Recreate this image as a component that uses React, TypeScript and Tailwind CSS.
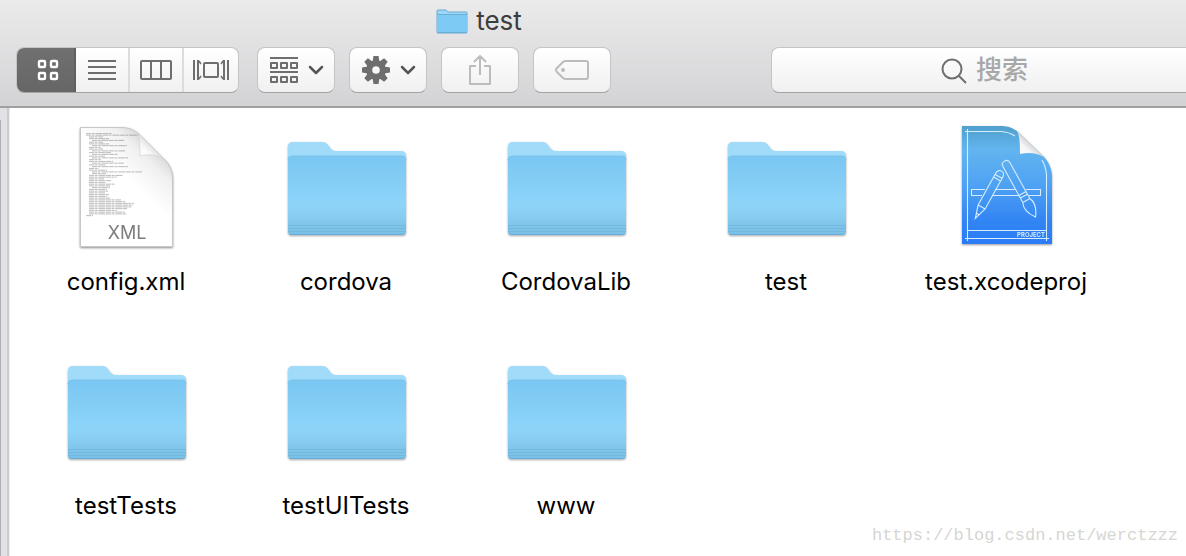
import { useState } from "react";

type Kind = "folder" | "xml" | "project";

const files: { name: string; kind: Kind }[] = [
  { name: "config.xml", kind: "xml" },
  { name: "cordova", kind: "folder" },
  { name: "CordovaLib", kind: "folder" },
  { name: "test", kind: "folder" },
  { name: "test.xcodeproj", kind: "project" },
  { name: "testTests", kind: "folder" },
  { name: "testUITests", kind: "folder" },
  { name: "www", kind: "folder" },
];

// [indent, length] of each line of the XML preview
const previewLines = [
  [0, 26], [0, 52], [3, 14], [3, 20], [6, 32], [3, 14], [3, 20], [6, 35], [3, 12],
  [3, 14], [6, 33], [3, 22], [6, 26], [3, 16], [6, 36], [3, 12], [3, 24], [6, 32],
  [3, 17], [6, 36], [3, 10], [3, 18], [6, 50], [6, 14], [3, 34], [3, 28], [3, 15],
  [3, 22], [3, 17], [3, 26], [3, 21], [6, 18], [3, 18], [3, 19], [3, 16], [3, 20],
  [3, 18], [3, 21], [3, 32], [3, 36], [3, 45], [3, 44], [3, 43], [3, 38], [3, 28],
  [3, 36], [3, 37], [0, 7],
];

const buttonBox =
  "flex h-[46px] items-center justify-center rounded-lg border border-[#c5c5c7] border-b-[#a3a3a5] bg-linear-to-b from-white to-[#f0f0f0]";

function FolderIcon() {
  return (
    <svg className="size-32 drop-shadow-[0_1px_1px_rgba(0,0,0,0.35)]" viewBox="-1 0 128 128" aria-hidden="true">
      <defs>
        <linearGradient id="folder-front" x1="0" y1="0" x2="0" y2="1">
          <stop offset="0" stopColor="#7ac7f2" />
          <stop offset="0.62" stopColor="#8dd4f8" />
          <stop offset="0.75" stopColor="#89cef2" />
          <stop offset="0.86" stopColor="#80c5ea" />
          <stop offset="1" stopColor="#7ac1e8" />
        </linearGradient>
      </defs>
      <path d="M5 108V24q0-5 5-5h29q4 0 6 3l3 4q2 2 4 2h66q5 0 5 5v75q0 4-4 4H9q-4 0-4-4z" fill="#a1dbfa" />
      <path d="M5 108V37q0-4 4-4h110q4 0 4 4v71q0 4-4 4H9q-4 0-4-4z" fill="url(#folder-front)" />
      <path d="M5 37q0-4 4-4h110q4 0 4 4" fill="none" stroke="#7bc3ec" strokeWidth="1" />
      <path d="M5 102.500h118M5 105.500h118M5 108.500h118" stroke="#74b8e0" strokeWidth="1" />
      <path d="M6 110.500q1 1 3 1h110q2 0 3-1" fill="none" stroke="#68add7" strokeWidth="1" />
    </svg>
  );
}

function XmlIcon() {
  return (
    <svg className="size-32 drop-shadow-[0_1px_1px_rgba(0,0,0,0.45)]" viewBox="-1 0 128 128" aria-hidden="true">
      <defs>
        <linearGradient id="xml-page" x1="0.75" y1="0.08" x2="0.5" y2="0.42">
          <stop offset="0" stopColor="#d2d2d2" />
          <stop offset="0.4" stopColor="#f0f0f0" />
          <stop offset="1" stopColor="#ffffff" />
        </linearGradient>
        <linearGradient id="xml-curl" x1="0" y1="1" x2="0.55" y2="0.45">
          <stop offset="0" stopColor="#ffffff" />
          <stop offset="0.6" stopColor="#fafafa" />
          <stop offset="1" stopColor="#dcdcdc" />
        </linearGradient>
      </defs>
      <path d="M17.500 4.500H58C66 4.500 71 7 76 11L101 36C107 42 109.500 48 109.500 57V123.500H17.500z" fill="url(#xml-page)" stroke="#c8c8c8" />
      <g fill="none" stroke="#555555" strokeWidth="0.8" strokeDasharray="5 0.6 3 0.8 7 0.5" opacity="0.5">
        {previewLines.map(([indent, length], i) => (
          <path key={i} d={`M${23 + indent} ${10.4 + i * 1.75}h${length}`} />
        ))}
      </g>
      <path d="M75 10.500C77 16 77 24 77 33C86 31 95 31 102 37L76 11z" fill="url(#xml-curl)" stroke="#cccccc" strokeWidth="0.6" />
      <text x="64" y="116" textAnchor="middle" fontSize="18" fill="#7c7c7c" className="font-['Inter',sans-serif]">
        XML
      </text>
    </svg>
  );
}

function ProjectIcon() {
  return (
    <svg className="size-32 drop-shadow-[0_1px_1px_rgba(0,0,0,0.4)]" viewBox="-1 0 128 128" aria-hidden="true">
      <defs>
        <linearGradient id="project-page" x1="0" y1="0" x2="0" y2="1">
          <stop offset="0" stopColor="#509fcd" />
          <stop offset="0.2" stopColor="#62b5ee" />
          <stop offset="0.5" stopColor="#4fa2f3" />
          <stop offset="0.8" stopColor="#3285f3" />
          <stop offset="1" stopColor="#2b7cf5" />
        </linearGradient>
        <linearGradient id="project-curl" x1="0" y1="1" x2="0.55" y2="0.45">
          <stop offset="0" stopColor="#ffffff" />
          <stop offset="0.6" stopColor="#f6f6f6" />
          <stop offset="1" stopColor="#cfcfcf" />
        </linearGradient>
      </defs>
      <path d="M19 3H57C65 3 70 5 75 9L100 33C106 39 109 46 109 55V121H19z" fill="url(#project-page)" />
      <g fill="none" stroke="#d6edff" strokeWidth="1.100">
        <path d="M24.500 6V118M22 8.500H58Q66 9 72 13M22 115.500H106M103.500 118V52Q103 44 99 37M24 107.500H104" />
        <path d="M42 66.500H28.500V72.500H39M52 66.500H73M49 72.500H76M83 66.500H97.500V72.500H86" />
        <g transform="translate(58 49) rotate(29)">
          <path d="M-4 4Q-4-1 0-1Q4-1 4 4V40L0 53L-4 40zM-4 5H4M-4 8H4M-4 40H4M-1.500 48H1.500" />
        </g>
        <g transform="translate(62 39) rotate(-29)">
          <path d="M-4 3Q-4-1 0-1Q4-1 4 3V36H-4zM-4 36V44H4V36M-4 39H4M-4 44Q-8 52 0 63Q8 52 4 44" />
        </g>
      </g>
      <path d="M74 8C77 14 77 22 77 31C86 29 94 30 101 34L75 9z" fill="url(#project-curl)" />
      <text x="102" y="114" textAnchor="end" fontSize="6" fontWeight="600" fill="#e3f2ff" className="font-['Inter',sans-serif]">
        PROJECT
      </text>
    </svg>
  );
}

function FileIcon({ kind }: { kind: Kind }) {
  if (kind === "xml") return <XmlIcon />;
  if (kind === "project") return <ProjectIcon />;
  return <FolderIcon />;
}

function Chevron() {
  return (
    <svg className="h-3 w-4" viewBox="0 0 16 12" fill="none" stroke="#555555" strokeWidth="2.500" strokeLinecap="round" strokeLinejoin="round" aria-hidden="true">
      <path d="M2 3l6 6 6-6" />
    </svg>
  );
}

function ViewIcon({ view }: { view: string }) {
  return (
    <svg className="h-6 w-9" viewBox="0 0 36 24" fill="none" stroke="currentColor" strokeWidth="2" aria-hidden="true">
      {view === "icons" && (
        <g strokeWidth="2.400">
          <rect x="11" y="3" width="6" height="6" rx="1" />
          <rect x="23" y="3" width="6" height="6" rx="1" />
          <rect x="11" y="15" width="6" height="6" rx="1" />
          <rect x="23" y="15" width="6" height="6" rx="1" />
        </g>
      )}
      {view === "list" && <path d="M4 3h28M4 9h28M4 15h28M4 21h28" />}
      {view === "columns" && (
        <>
          <rect x="3" y="3" width="30" height="18" rx="1" />
          <path d="M13 3v18M23 3v18" />
        </>
      )}
      {view === "flow" && (
        <>
          <rect x="11" y="5" width="14" height="14" rx="1" />
          <path d="M1 2v20M5 2v20M31 2v20M35 2v20" />
          <path d="M6 3l2 3M6 21l2-3M30 3l-2 3M30 21l-2-3" strokeWidth="1.500" />
        </>
      )}
    </svg>
  );
}

const views = [
  { id: "icons", label: "图标", size: "w-[59px]" },
  { id: "list", label: "列表", size: "w-[54px]" },
  { id: "columns", label: "分栏", size: "w-[54px]" },
  { id: "flow", label: "Cover Flow", size: "w-[54px]" },
];

function ViewSwitch() {
  const [active, setActive] = useState("icons");

  return (
    <div className="flex h-[46px] overflow-hidden rounded-lg border border-[#c5c5c7] border-b-[#a3a3a5] bg-linear-to-b from-white to-[#f0f0f0]">
      {views.map(({ id, label, size }) => (
        <button
          key={id}
          aria-label={label}
          aria-pressed={active === id}
          onClick={() => setActive(id)}
          className={`flex items-center justify-center border-r-2 last:border-r-0 ${size} ${
            active === id ? "border-[#606060] bg-linear-to-b from-[#707070] to-[#666666] text-white" : "border-[#dcdcdc] text-[#6e6e6e]"
          }`}
        >
          <ViewIcon view={id} />
        </button>
      ))}
    </div>
  );
}

function Toolbar() {
  return (
    <div className="flex pl-4">
      <ViewSwitch />
      <div className="ml-[18px] flex gap-[14px]">
        <button aria-label="排列" className={`${buttonBox} w-[78px] gap-2`}>
          <svg className="h-7 w-8" viewBox="0 0 32 28" fill="none" stroke="#6e6e6e" strokeWidth="2" aria-hidden="true">
            <path d="M2 2h28M2 16h28" />
            <path d="M3 7h6v5H3zM13 7h6v5h-6zM23 7h6v5h-6zM3 21h6v5H3zM13 21h6v5h-6zM23 21h6v5h-6z" strokeLinejoin="round" />
          </svg>
          <Chevron />
        </button>
        <button aria-label="操作" className={`${buttonBox} w-[78px] gap-2`}>
          <svg className="h-8 w-8" viewBox="-16 -16 32 32" aria-hidden="true">
            {[0, 45, 90, 135, 180, 225, 270, 315].map((angle) => (
              <path key={angle} d="M-3.500-8L-2.500-14h5L3.500-8z" fill="#6e6e6e" transform={`rotate(${angle})`} />
            ))}
            <circle r="6.800" fill="none" stroke="#6e6e6e" strokeWidth="6" />
          </svg>
          <Chevron />
        </button>
        <button aria-label="共享" className={`${buttonBox} w-[78px]`}>
          <svg className="h-8 w-6" viewBox="0 0 24 32" fill="none" stroke="#bcbcbc" strokeWidth="2" strokeLinejoin="round" aria-hidden="true">
            <path d="M8 12H2v18h20V12h-6M12 21V2M6 8l6-6 6 6" />
          </svg>
        </button>
        <button aria-label="标签" className={`${buttonBox} w-[78px]`}>
          <svg className="h-6 w-9" viewBox="0 0 36 24" fill="none" stroke="#bcbcbc" strokeWidth="2" strokeLinejoin="round" aria-hidden="true">
            <path d="M12 3h20q2 0 2 2v14q0 2-2 2H12q-2 0-3-1l-6-6q-2-2 0-4l6-6q1-1 3-1z" />
            <circle cx="9" cy="12" r="2" fill="#bcbcbc" stroke="none" />
          </svg>
        </button>
      </div>
      <label className={`${buttonBox} -mr-[13px] ml-40 flex-1 gap-2`}>
        <svg className="size-7" viewBox="0 0 28 28" fill="none" stroke="#6e6e6e" strokeWidth="2" aria-hidden="true">
          <circle cx="12" cy="13" r="9.500" />
          <path d="M19 20l7 7" />
        </svg>
        <input
          type="text"
          aria-label="搜索"
          placeholder="搜索"
          className="w-[54px] bg-transparent text-[26px] leading-9 font-medium outline-none placeholder:text-[#a8a8a8]"
        />
      </label>
    </div>
  );
}

export default function App() {
  return (
    <div className="relative flex min-h-screen flex-col overflow-hidden bg-white font-['Inter','Noto_Sans_CJK_SC',sans-serif] text-black">
      <header className="border-b-2 border-[#a0a0a0] bg-linear-to-b from-[#ebebec] to-[#d3d3d5] pb-[13px]">
        <div className="mb-[5px] flex h-[42px] items-center justify-center gap-2 pr-[228px]">
          <svg className="h-[26px] w-8" viewBox="0 0 32 26" aria-hidden="true">
            <path d="M1 24V3q0-1 1-1h8l2 2h18q1 0 1 1v19q0 1-1 1H2q-1 0-1-1z" fill="#9cd8f8" stroke="#6ba9cf" strokeWidth="1" />
            <path d="M1 7h30v17q0 1-1 1H2q-1 0-1-1z" fill="#7dcaf5" />
            <path d="M1 6.500h30M1 24.500h30" stroke="#66afd9" />
          </svg>
          <h1 className="text-[26px] leading-8 text-[#3d3d3d]">test</h1>
        </div>
        <Toolbar />
      </header>

      <main className="flex flex-1">
        <div className="flex w-[10px] border-r border-[#ececf1] bg-[#e2e2e6]">
          <div className="mt-3 w-px bg-[#aeaeb2]" />
          <div className="ml-auto w-0.5 bg-[#cbcbd0]" />
        </div>
        <ul className="grid flex-1 grid-cols-[repeat(auto-fill,220px)] content-start gap-y-[49px] pt-[15px] pl-1.5">
          {files.map(({ name, kind }) => (
            <li key={name} className="flex flex-col items-center gap-[15px]">
              <FileIcon kind={kind} />
              <span className="text-2xl leading-8">{name}</span>
            </li>
          ))}
        </ul>
      </main>

      <p className="absolute right-2 bottom-2 font-['Liberation_Mono',monospace] text-[17px] leading-6 text-[#d6d6d2]">
        https://blog.csdn.net/werctzzz
      </p>
    </div>
  );
}
